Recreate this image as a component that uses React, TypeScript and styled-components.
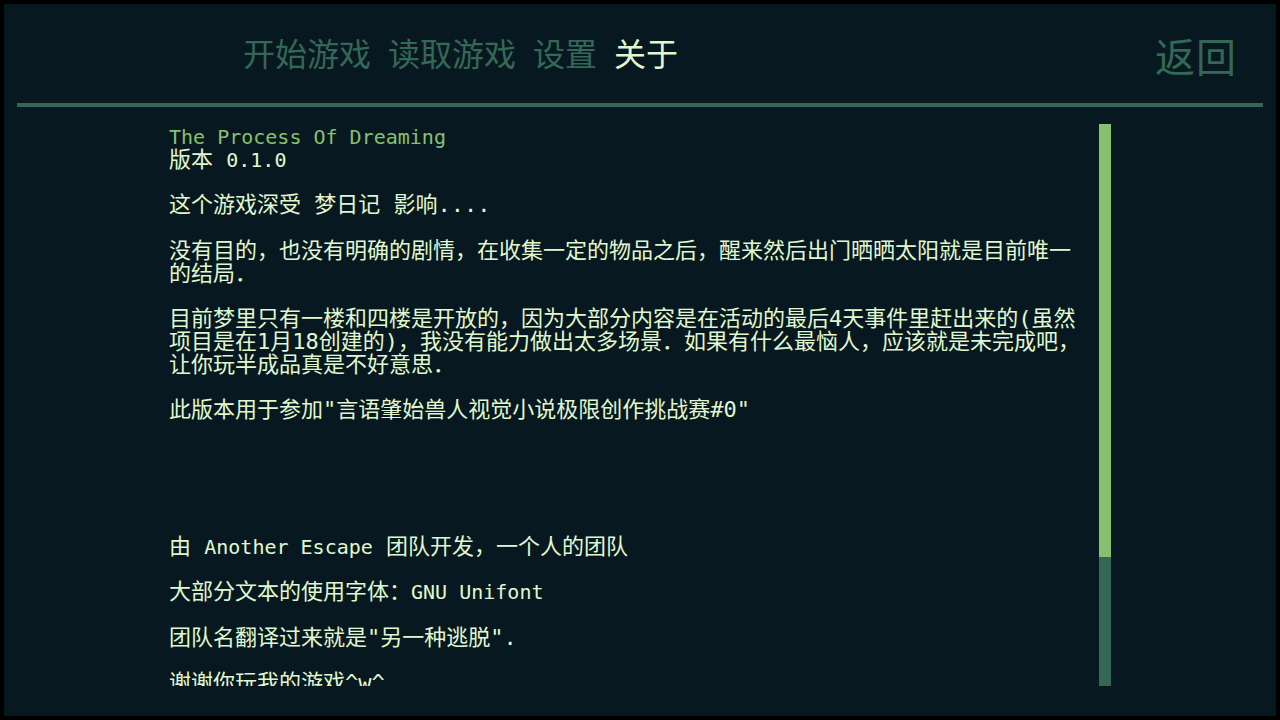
import React, { useLayoutEffect, useRef, useState } from 'react'
import styled, { createGlobalStyle } from 'styled-components'

// game boy palette
const DARK = '#081820'
const MID = '#346856'
const LIGHT = '#88c070'
const PALE = '#e0f8d0'
const LINE = 22.75

const GlobalStyle = createGlobalStyle`
  html, body {
    margin: 0;
    padding: 0;
    background: #000;
  }
  * {
    box-sizing: border-box;
  }
`

const Screen = styled.div`
  width: 1280px;
  height: 720px;
  padding: 4px;
  background: #000;
  overflow: hidden;
`

const Panel = styled.div`
  display: flex;
  flex-direction: column;
  height: 100%;
  background: ${DARK};
  font-family: 'Noto Sans CJK SC', sans-serif;
`

const Header = styled.header`
  display: flex;
  align-items: center;
  justify-content: space-between;
  height: 99px;
  padding: 0 39px 4px 239px;
`

const Nav = styled.nav`
  display: flex;
  align-items: center;
  gap: 17px;
`

const NavItem = styled.span<{ $active?: boolean }>`
  font-size: 32px;
  line-height: 1;
  color: ${(p) => (p.$active ? PALE : MID)};
  cursor: pointer;
`

const BackButton = styled.span`
  padding-top: 7px;
  font-size: 40px;
  line-height: 1;
  letter-spacing: 1px;
  color: ${MID};
  cursor: pointer;
`

const Divider = styled.div`
  height: 4px;
  margin: 0 13px;
  background: ${MID};
`

const Body = styled.main`
  display: flex;
  flex: 1;
  min-height: 0;
  padding: 17px 0 30px 165px;
`

const Viewport = styled.div`
  width: 914px;
  height: 100%;
  overflow: hidden;
`

const Text = styled.div`
  padding: 2px 0 135px;
  font-family: 'DejaVu Sans Mono', 'Noto Sans CJK SC', monospace;
  font-size: 22px;
  line-height: ${LINE}px;
  color: ${PALE};
`

const Para = styled.p<{ $after?: number }>`
  margin: 0 0 ${(p) => (p.$after ?? 1) * LINE}px;
`

const Title = styled.span`
  display: block;
  color: ${LIGHT};
`

const Latin = styled.span`
  font-family: 'DejaVu Sans Mono', monospace;
  font-size: 20px;
`

const ScrollTrack = styled.div`
  width: 12px;
  height: 100%;
  margin-left: 16px;
  background: ${MID};
`

const ScrollThumb = styled.div`
  width: 100%;
  background: ${LIGHT};
`

export default function App() {
  const viewRef = useRef<HTMLDivElement>(null)
  const [ratio, setRatio] = useState(0.772)

  useLayoutEffect(() => {
    const el = viewRef.current
    if (!el) return
    setRatio(Math.min(1, el.clientHeight / el.scrollHeight))
  }, [])

  return (
    <Screen>
      <GlobalStyle />
      <Panel>
        <Header>
          <Nav>
            <NavItem>开始游戏</NavItem>
            <NavItem>读取游戏</NavItem>
            <NavItem>设置</NavItem>
            <NavItem $active>关于</NavItem>
          </Nav>
          <BackButton>返回</BackButton>
        </Header>
        <Divider />
        <Body>
          <Viewport ref={viewRef}>
            <Text>
              <Para>
                <Title>
                  <Latin>The Process Of Dreaming</Latin>
                </Title>
                版本 <Latin>0.1.0</Latin>
              </Para>
              <Para>这个游戏深受 梦日记 影响....</Para>
              <Para>
                没有目的，也没有明确的剧情，在收集一定的物品之后，醒来然后出门晒晒太阳就是目前唯一的结局．
              </Para>
              <Para>
                目前梦里只有一楼和四楼是开放的，因为大部分内容是在活动的最后4天事件里赶出来的(虽然项目是在1月18创建的)，我没有能力做出太多场景．如果有什么最恼人，应该就是未完成吧，让你玩半成品真是不好意思．
              </Para>
              <Para $after={5}>此版本用于参加"言语肇始兽人视觉小说极限创作挑战赛#0"</Para>
              <Para>
                由 <Latin>Another Escape</Latin> 团队开发，一个人的团队
              </Para>
              <Para>
                大部分文本的使用字体：<Latin>GNU Unifont</Latin>
              </Para>
              <Para>团队名翻译过来就是"另一种逃脱".</Para>
              <Para>谢谢你玩我的游戏^w^</Para>
            </Text>
          </Viewport>
          <ScrollTrack>
            <ScrollThumb style={{ height: `${ratio * 100}%` }} />
          </ScrollTrack>
        </Body>
      </Panel>
    </Screen>
  )
}
